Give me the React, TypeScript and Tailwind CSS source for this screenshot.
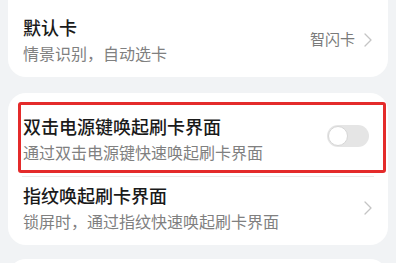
import React from "react";

const font = { fontFamily: '"Noto Sans CJK SC", "Noto Sans", sans-serif' };

const Chevron: React.FC = () => (
  <svg width="8" height="14" viewBox="0 0 8 14" fill="none" className="shrink-0">
    <path d="M1 1l6 6-6 6" stroke="#c4c4c4" strokeWidth="1.3" strokeLinecap="round" strokeLinejoin="round" />
  </svg>
);

type TextProps = { title: string; desc: string };

const RowText: React.FC<TextProps> = ({ title, desc }) => (
  <div className="flex flex-col">
    <div className="text-[18px] leading-[24px] font-medium text-[#1a1a1a]">{title}</div>
    <div className="text-[16px] leading-[22px] mt-[3px] text-[#808080]">{desc}</div>
  </div>
);

const Toggle: React.FC = () => (
  <div className="w-[42px] h-[22px] rounded-full bg-[#e5e5e5] flex items-center px-[1px] mb-[6px]">
    <div className="w-[20px] h-[20px] rounded-full bg-white border border-[#d6d6d6]" />
  </div>
);

export default function App() {
  return (
    <div className="w-[396px] h-[263px] overflow-hidden bg-[#f1f3f5] px-[8px]" style={font}>
      {/* 默认卡 */}
      <div className="bg-white rounded-b-[18px] pl-[15px] pr-[16px] pt-[15px] pb-[13px] flex items-center justify-between">
        <RowText title="默认卡" desc="情景识别，自动选卡" />
        <div className="flex items-center gap-[9px]">
          <span className="text-[15px] text-[#7a7a7a]">智闪卡</span>
          <Chevron />
        </div>
      </div>

      {/* 刷卡 */}
      <div className="bg-white rounded-[18px] mt-[16px]">
        <div className="relative pt-[21px] pb-[13px] pl-[15px] pr-[19px] flex items-center justify-between">
          <div className="absolute left-[10px] right-[2px] top-[9px] bottom-[3px] border-[3px] border-[#e42b2b] rounded-[3px]" />
          <RowText title="双击电源键唤起刷卡界面" desc="通过双击电源键快速唤起刷卡界面" />
          <Toggle />
        </div>
        <div className="mx-[14px] h-px bg-[#ebebeb]" />
        <div className="pt-[6px] pb-[13px] pl-[15px] pr-[16px] flex items-center justify-between">
          <RowText title="指纹唤起刷卡界面" desc="锁屏时，通过指纹快速唤起刷卡界面" />
          <Chevron />
        </div>
      </div>

      <div className="bg-white rounded-[18px] mt-[14px] h-[40px]" />
    </div>
  );
}
